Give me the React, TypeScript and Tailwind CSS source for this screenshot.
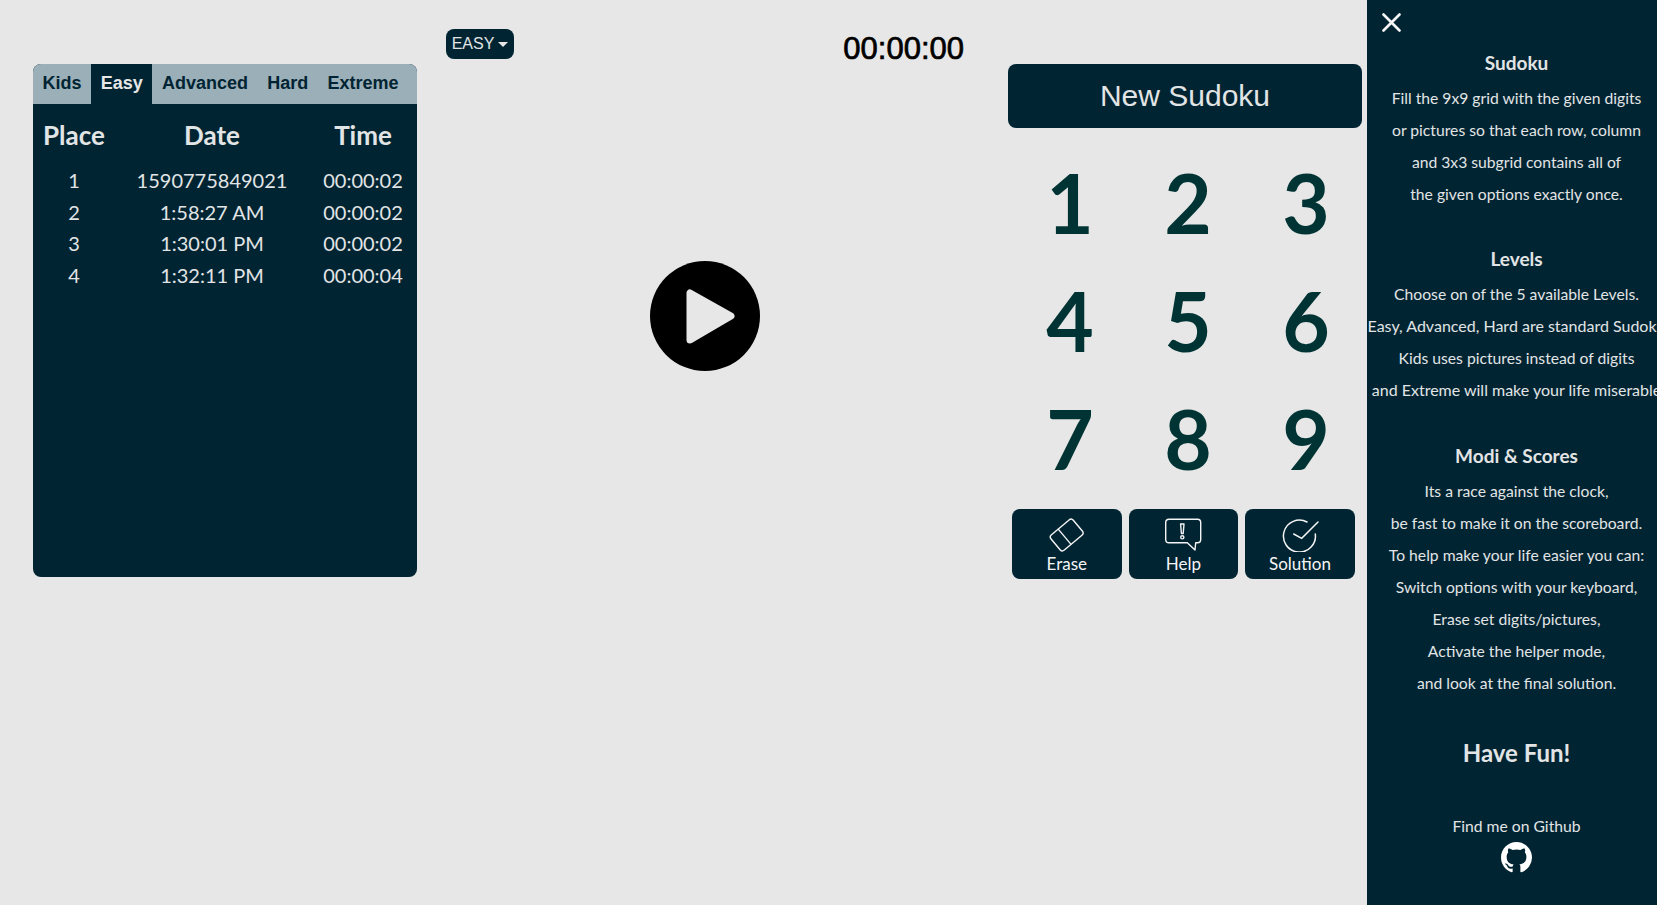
import React from 'react';
import { BsGithub } from 'react-icons/bs';

const TABS = ['Kids', 'Easy', 'Advanced', 'Hard', 'Extreme'];

const SCORES = [
  { place: 1, date: '1590775849021', time: '00:00:02' },
  { place: 2, date: '1:58:27 AM', time: '00:00:02' },
  { place: 3, date: '1:30:01 PM', time: '00:00:02' },
  { place: 4, date: '1:32:11 PM', time: '00:00:04' },
];

const DIGITS = [1, 2, 3, 4, 5, 6, 7, 8, 9];

const EraseIcon = () => (
  <svg width="38" height="34" viewBox="0 0 38 34" fill="none" stroke="#f5f5f5" strokeWidth="1.4">
    <g transform="rotate(-40 18.7 17)">
      <rect x="4.2" y="7" width="29" height="20" rx="3" />
      <path d="M16 7 V27" />
    </g>
  </svg>
);

const HelpIcon = () => (
  <svg width="38" height="34" viewBox="0 0 38 34" fill="none" stroke="#f5f5f5" strokeWidth="1.4" strokeLinejoin="round">
    <path d="M5 1.3 H33.5 Q36.7 1.3 36.7 4.5 V21.5 Q36.7 24.7 33.5 24.7 H31.7 L31 32 L23.3 24.7 H5 Q1.7 24.7 1.7 21.5 V4.5 Q1.7 1.3 5 1.3 Z" />
    <path d="M16.6 6 H20 L19.2 15.5 H17.4 Z" />
    <circle cx="18.3" cy="19.3" r="1.6" />
  </svg>
);

const SolutionIcon = () => (
  <svg width="38" height="34" viewBox="0 0 38 34" fill="none" stroke="#f5f5f5" strokeWidth="1.5" strokeLinecap="round">
    <path d="M26 4 A16 16 0 1 0 34.3 16" />
    <path d="M12.7 16 L20.7 20.3 L37 4" />
  </svg>
);

const ACTIONS = [
  { label: 'Erase', icon: <EraseIcon /> },
  { label: 'Help', icon: <HelpIcon /> },
  { label: 'Solution', icon: <SolutionIcon /> },
];

const HELP = [
  {
    title: 'Sudoku',
    className: '',
    lines: [
      'Fill the 9x9 grid with the given digits',
      'or pictures so that each row, column',
      'and 3x3 subgrid contains all of',
      'the given options exactly once.',
    ],
  },
  {
    title: 'Levels',
    className: 'mt-[30px]',
    lines: [
      'Choose on of the 5 available Levels.',
      'Easy, Advanced, Hard are standard Sudoku',
      'Kids uses pictures instead of digits',
      'and Extreme will make your life miserable',
    ],
  },
  {
    title: 'Modi & Scores',
    className: 'mt-[31px]',
    lines: [
      'Its a race against the clock,',
      'be fast to make it on the scoreboard.',
      'To help make your life easier you can:',
      'Switch options with your keyboard,',
      'Erase set digits/pictures,',
      'Activate the helper mode,',
      'and look at the final solution.',
    ],
  },
];

const ScorePanel = () => (
  <div className="w-[384px] h-[513px] rounded-lg bg-[#012433] overflow-hidden text-[#e2e4e5]">
    <div className="flex h-[40px] bg-[#9bafb8] font-['Liberation_Sans',sans-serif] text-[18px] font-bold">
      {TABS.map((tab) => (
        <div
          key={tab}
          className={`flex items-center px-[9.6px] pb-[2px] ${tab === 'Easy' ? 'bg-[#012433] text-[#e7e7e7]' : 'text-[#012433]'}`}
        >
          {tab}
        </div>
      ))}
    </div>
    <div className="grid grid-cols-[82px_194px_108px] text-center font-['Lato',sans-serif] text-[20px] leading-[31.7px] pt-[15px]">
      <div className="text-[26px] font-bold leading-[32px] mb-[14px]">Place</div>
      <div className="text-[26px] font-bold leading-[32px] mb-[14px]">Date</div>
      <div className="text-[26px] font-bold leading-[32px] mb-[14px]">Time</div>
      {SCORES.map((row) => (
        <React.Fragment key={row.place}>
          <div>{row.place}</div>
          <div>{row.date}</div>
          <div>{row.time}</div>
        </React.Fragment>
      ))}
    </div>
  </div>
);

const HelpPanel = () => (
  <aside className="w-[290px] h-full shrink-0 overflow-hidden bg-[#012433] text-[#e2e4e5] font-['Lato',sans-serif]">
    <div className="relative w-[299px] pt-[44px] text-center text-[15.7px] leading-[32px] whitespace-nowrap">
      <svg className="absolute left-[15px] top-[13px]" width="19" height="19" viewBox="0 0 19 19" stroke="#f5f5f5" strokeWidth="2.6" strokeLinecap="round">
        <path d="M1.5 1.5 L17.5 17.5 M17.5 1.5 L1.5 17.5" />
      </svg>
      {HELP.map((section) => (
        <div key={section.title} className={section.className}>
          <div className="text-[19px] font-bold leading-[38px]">{section.title}</div>
          {section.lines.map((line) => (
            <div key={line} className={line.length > 39 ? 'text-[16px]' : ''}>
              {line}
            </div>
          ))}
        </div>
      ))}
      <div className="mt-[36px] text-[24px] font-bold leading-[36px]">Have Fun!</div>
      <div className="mt-[39px]">Find me on Github</div>
      <BsGithub className="mx-auto text-white" size={31} />
    </div>
  </aside>
);

export default function App() {
  return (
    <div className="flex h-screen overflow-hidden bg-[#e7e7e7]">
      <div className="w-[417px] shrink-0 pl-[33px] pt-[64px]">
        <ScorePanel />
      </div>

      <div className="w-[591px] shrink-0 pt-[29px]">
        <div className="flex items-start">
          <button className="ml-[29px] flex h-[30px] w-[68px] items-center justify-center gap-[4px] rounded-lg bg-[#012433] font-['Liberation_Sans',sans-serif] text-[16px] text-[#e2e4e5]">
            EASY
            <span className="border-x-[5px] border-t-[5px] border-x-transparent border-t-[#e7e7e7]" />
          </button>
          <div className="ml-auto mr-[44px] font-['Liberation_Sans',sans-serif] text-[31px] leading-[40px] text-black [-webkit-text-stroke:0.7px_black]">
            00:00:00
          </div>
        </div>
        <svg className="ml-[233px] mt-[192px]" width="110" height="110" viewBox="0 0 110 110">
          <circle cx="55" cy="55" r="55" fill="#000" />
          <path d="M40 32 V79 L81 55 Z" fill="#e7e7e7" stroke="#e7e7e7" strokeWidth="7" strokeLinejoin="round" />
        </svg>
      </div>

      <div className="w-[359px] shrink-0 pt-[64px]">
        <button className="h-[64px] w-[354px] rounded-lg bg-[#012433] pb-[2px] font-['Liberation_Sans',sans-serif] text-[30px] text-[#e2e4e5]">
          New Sudoku
        </button>
        <div className="ml-[3px] mt-[15px] grid w-[354px] grid-cols-3 font-['Lato',sans-serif] text-[82px] font-bold text-[#003333]">
          {DIGITS.map((digit) => (
            <div key={digit} className="flex h-[118.33px] items-center justify-center">
              {digit}
            </div>
          ))}
        </div>
        <div className="ml-[4px] mt-[11px] flex gap-[7px] font-['Lato',sans-serif] text-[17px] text-[#f5f5f5]">
          {ACTIONS.map((action) => (
            <button key={action.label} className="flex h-[70px] w-[109.6px] flex-col items-center rounded-lg bg-[#012433] pt-[9px] leading-[22px]">
              <span className="flex h-[35px] items-start">{action.icon}</span>
              {action.label}
            </button>
          ))}
        </div>
      </div>

      <HelpPanel />
    </div>
  );
}
